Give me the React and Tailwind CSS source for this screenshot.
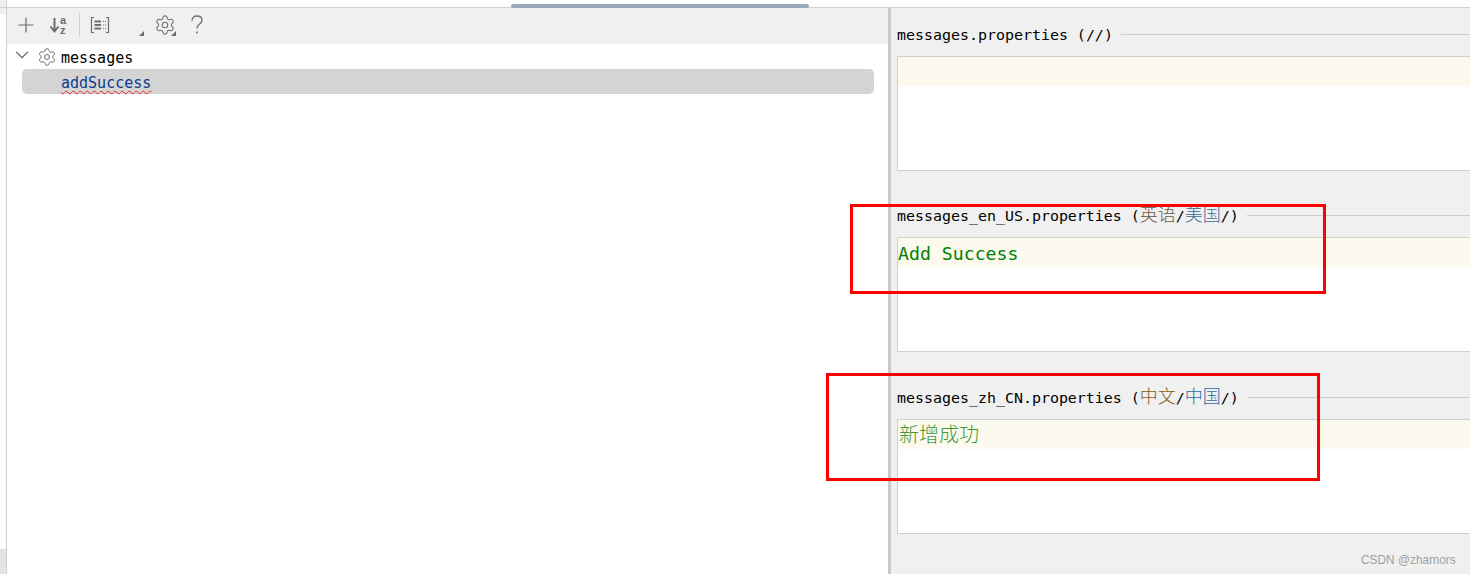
import { Settings, ChevronDown } from 'lucide-react'

const mono = 'font-["DejaVu_Sans_Mono","Noto_Sans_CJK_SC",monospace]'

const Corner = () => (
  <span className="absolute right-px bottom-px w-0 h-0 border-l-[5px] border-l-transparent border-b-[5px] border-b-[#6e6e6e]" />
)

const Toolbar = () => (
  <div className="flex items-center h-9 bg-[#f0f0f0] pl-[9px] pb-[2px] shrink-0">
    <button className="w-5 h-5 flex items-center justify-center shrink-0">
      <svg width="16" height="16" viewBox="0 0 16 16" stroke="#6e6e6e" strokeWidth="1.2">
        <path d="M8 0.5V15.5M0.5 8H15.5" />
      </svg>
    </button>
    <button className="w-5 h-5 ml-[13px] flex items-center justify-center shrink-0">
      <svg width="20" height="20" viewBox="0 0 20 20">
        <path d="M5.5 3V16M1.5 11.5L5.5 16.5L9.5 11.5" stroke="#6e6e6e" strokeWidth="2" fill="none" />
        <text x="11" y="9" fontSize="11" fontWeight="700" fill="#6e6e6e" fontFamily="Liberation Sans">a</text>
        <text x="11" y="18.5" fontSize="11" fontWeight="700" fill="#6e6e6e" fontFamily="Liberation Sans">z</text>
      </svg>
    </button>
    <div className="w-px h-6 bg-[#cfcfcf] ml-[10px] shrink-0" />
    <button className="w-5 h-5 ml-[10px] flex items-center justify-center shrink-0">
      <svg width="20" height="18" viewBox="0 0 20 18" fill="none" stroke="#6e6e6e" strokeWidth="1.2">
        <path d="M4 1.5H1.5V16.5H4M16 1.5H18.5V16.5H16" />
        <path d="M4.5 5.5H11M4.5 9H11M4.5 12.5H11" strokeWidth="1.8" />
        <path d="M13 5.5H16M13 9H16M13 12.5H16" strokeWidth="1" strokeDasharray="1 1" />
      </svg>
    </button>
    <div className="relative w-[21px] h-6 ml-[14px] shrink-0">
      <Corner />
    </div>
    <button className="relative w-6 h-6 ml-[8px] flex items-center justify-center text-[#6e6e6e] shrink-0">
      <Settings size={22} strokeWidth={1.15} />
      <Corner />
    </button>
    <svg className="ml-[14px] shrink-0" width="12" height="20" viewBox="0 0 12 20" fill="none" stroke="#6e6e6e" strokeWidth="1.3">
      <path d="M1 5.5C1 2.5 3 1 6 1C9 1 11 2.7 11 5.2C11 7.2 9.8 8.2 8.3 9.3C6.8 10.4 6 11.3 6 13.5" />
      <path d="M6 16.5V18.5" strokeWidth="1.6" />
    </svg>
  </div>
)

const TreePanel = () => (
  <div className="flex flex-col w-[881px] bg-white shrink-0">
    <Toolbar />
    <div className="flex items-center h-[25px] pl-[4px]">
      <ChevronDown size={22} strokeWidth={1.3} className="text-[#6e6e6e] -mt-[3px]" />
      <Settings size={20} strokeWidth={1.2} className="ml-[4px] text-[#6e6e6e]" />
      <span className={`ml-[4px] pt-[4px] text-[15px] text-black ${mono}`}>messages</span>
    </div>
    <div className="flex items-center h-[25px] ml-[15px] w-[852px] rounded-[5px] bg-[#d4d4d4] pl-[39px]">
      <span className={`pt-[4px] text-[15px] text-[#0a3a8c] underline decoration-wavy decoration-[#f02020] decoration-1 underline-offset-[2px] ${mono}`}>
        addSuccess
      </span>
    </div>
  </div>
)

const Section = ({ file, children, text, className }) => (
  <div className={className}>
    <div className="flex items-center h-[22px] gap-[8px]">
      <span className={`pt-[2px] text-[14.95px] text-black whitespace-pre ${mono}`}>
        {file} ({children})
      </span>
      <div className="flex-1 h-px bg-[#cdcdcd]" />
    </div>
    <div className="mt-[11px] h-[115px] border border-r-0 border-[#cfcfcf] bg-white">
      <div className="h-[29px] bg-[#fcf9ee] flex items-center">{text}</div>
    </div>
  </div>
)

const Cjk = ({ color, children }) => (
  <span className={`text-[18px] leading-none font-['Noto_Sans_CJK_SC',sans-serif] font-light ${color}`}>{children}</span>
)

const EditorPanel = () => (
  <div className="flex-1 bg-[#f0f0f0] pl-[6px] pt-[15px]">
    <Section file="messages.properties" text={null}>//</Section>
    <Section
      className="mt-[33px]"
      file="messages_en_US.properties"
      text={<span className={`pt-[2px] text-[18.2px] text-[#008000] ${mono}`}>Add Success</span>}
    >
      <Cjk color="text-[#6b5a45]">英语</Cjk>/<Cjk color="text-[#3a6a95]">美国</Cjk>/
    </Section>
    <Section
      className="mt-[34px]"
      file="messages_zh_CN.properties"
      text={<span className="ml-px -mt-[2px] text-[20px] leading-none text-[#3c9a3c] font-['Noto_Sans_CJK_SC',sans-serif] font-light">新增成功</span>}
    >
      <Cjk color="text-[#8a5a20]">中文</Cjk>/<Cjk color="text-[#2a6aa5]">中国</Cjk>/
    </Section>
  </div>
)

export default function App() {
  return (
    <div className="relative flex flex-col w-[1470px] h-[574px] overflow-hidden bg-white">
      {/* top strip */}
      <div className="flex h-2 shrink-0 border-b border-[#d0d0d0]">
        <div className="w-[6px] bg-[#f0f0f0]" />
        <div className="w-px bg-[#d0d0d0]" />
      </div>

      <div className="flex flex-1 min-h-0">
        {/* left gutter */}
        <div className="flex flex-col justify-between w-[7px] shrink-0 border-r border-[#d0d0d0]">
          <div className="h-[6px] bg-[#f0f0f0]" />
          <div className="h-[25px] bg-[#e4e4e4]" />
        </div>
        <TreePanel />
        <div className="w-[3px] bg-[#c9c9c9] shrink-0" />
        <EditorPanel />
      </div>

      {/* scrollbar thumb above the panes */}
      <div className="absolute left-[511px] top-[4px] w-[298px] h-[4px] rounded-sm bg-[#9aa8bd]" />

      {/* annotation rectangles */}
      <div className="absolute left-[850px] top-[204px] w-[476px] h-[90px] border-[3px] border-[#ff0000]" />
      <div className="absolute left-[826px] top-[373px] w-[494px] h-[108px] border-[3px] border-[#ff0000]" />

      <span className="absolute left-[1361px] top-[552px] text-[11.9px] text-[#a0a0a0] font-['Liberation_Sans',sans-serif]">
        CSDN @zhamors
      </span>
    </div>
  )
}
